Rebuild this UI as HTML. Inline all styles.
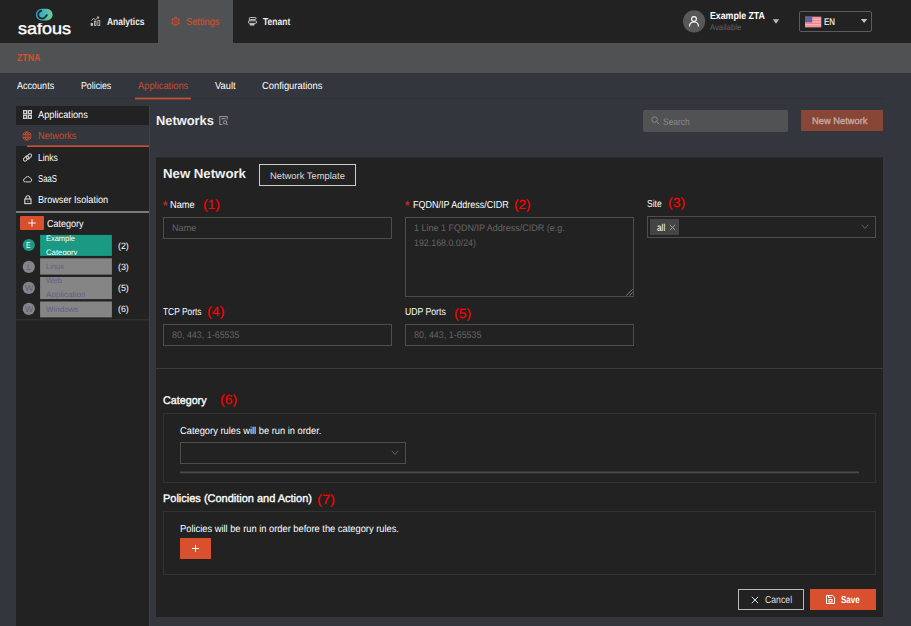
<!DOCTYPE html>
<html><head><meta charset="utf-8">
<style>
*{box-sizing:border-box;margin:0;padding:0}
html,body{width:911px;height:626px;overflow:hidden;background:#33363d;font-family:"Liberation Sans",sans-serif;color:#fff}
.a{position:absolute}
.t{position:absolute;white-space:nowrap;line-height:1;transform-origin:0 50%}
.b{font-weight:bold}
.or{color:#d9502e}
.red{color:#e0161b}
.ph{color:#5e5e5e}
.inp{position:absolute;border:1px solid #4e4e4e;background:#222}
#logo{-webkit-text-stroke:0.4px #fff}
.sb{-webkit-text-stroke:0.35px currentColor}.rs{-webkit-text-stroke:0.15px currentColor}
</style></head><body>
<!-- header -->
<div class="a" style="left:0;top:0;width:911px;height:43px;background:#222"></div>
<div class="a" style="left:158px;top:0;width:75px;height:43px;background:#505153"></div>
<div class="a" style="left:0;top:43px;width:911px;height:30px;background:#505153"></div>
<!-- logo -->
<svg class="a" style="left:34px;top:6px" width="20" height="16" viewBox="34 5.75 20 16">
<defs><linearGradient id="g" x1="0" x2="1"><stop offset="0" stop-color="#27a5d3"/><stop offset="0.45" stop-color="#3fb5bd"/><stop offset="1" stop-color="#74cc8c"/></linearGradient></defs>
<rect x="35.9" y="8.6" width="16.7" height="11.7" rx="5.85" fill="url(#g)"/>
<path d="M42 10.3 A4 4 0 1 0 44.9 17.2 L47.3 14.2" stroke="#222" stroke-width="1.8" fill="none" stroke-linejoin="round"/>
</svg>
<!-- nav -->
<svg class="a" style="left:90px;top:16px" width="11" height="11" viewBox="90 16 11 11" fill="none" stroke="#cfcfcf"><rect x="91.1" y="23.4" width="1.4" height="2" stroke-width="0.8" fill="#cfcfcf"/><rect x="94.4" y="21.3" width="1.6" height="4.1" stroke-width="0.8"/><rect x="97.9" y="20.6" width="1.9" height="4.8" stroke-width="0.8"/><path d="M91.4 20.6 L93.5 18.5 L95.6 19.8 L98.3 17.2 M97 17h1.6v1.6" stroke-width="0.9"/></svg>
<svg class="a" style="left:170px;top:16px" width="11" height="11" viewBox="-5.6 -5.5 11 11" fill="none" stroke="#c94d2e"><circle r="3.3" stroke-width="1"/><circle r="1.2" stroke-width="0.8"/><g stroke-width="2.1"><path d="M0 -3.3V-4.6M0 3.3V4.6" /><path d="M0 -3.3V-4.6M0 3.3V4.6" transform="rotate(60)"/><path d="M0 -3.3V-4.6M0 3.3V4.6" transform="rotate(120)"/></g></svg>
<svg class="a" style="left:247px;top:16px" width="11" height="11" viewBox="247 16 11 11" fill="none" stroke="#c8c8c8" stroke-width="0.95"><rect x="249.3" y="17.5" width="6.8" height="2" rx="1"/><rect x="248.4" y="20.8" width="8.2" height="2.6" rx="1.3"/><path d="M250.3 24.7h3.6" stroke-width="1.6" stroke-linecap="round"/><path d="M249.5 19.5v1.3M251 23.4v0.8" stroke-width="1.4"/></svg>
<!-- user -->
<svg class="a" style="left:682px;top:9px" width="24" height="24" viewBox="0 0 24 24"><circle cx="12.1" cy="12.3" r="11.1" fill="#585858"/></svg>
<svg class="a" style="left:688px;top:14.5px" width="12" height="13" viewBox="0 0 12 13" fill="none" stroke="#fff" stroke-width="1.1"><circle cx="6" cy="4" r="2.4"/><path d="M1.5 11.5 C1.5 8.2 3.6 7 6 7 C8.4 7 10.5 8.2 10.5 11.5"/></svg>
<svg class="a" style="left:772px;top:18px" width="8" height="7" viewBox="0 0 8 7"><path d="M0.8 1.2h6.4L4 5.8z" fill="#bdbdbd"/></svg>
<div class="a" style="left:799px;top:11px;width:73px;height:21px;border:1px solid #5c5c5c;border-radius:2px;background:#222"></div>
<svg class="a" style="left:804px;top:16px" width="18" height="12" viewBox="804 16 18 12"><rect x="805" y="16.8" width="16.2" height="10.4" fill="#f6c3c8"/><g fill="#f0747f"><rect x="805" y="16.8" width="16.2" height="0.8"/><rect x="805" y="18.4" width="16.2" height="0.8"/><rect x="805" y="20" width="16.2" height="0.8"/><rect x="805" y="21.6" width="16.2" height="0.8"/><rect x="805" y="23.2" width="16.2" height="0.8"/><rect x="805" y="24.8" width="16.2" height="0.8"/><rect x="805" y="26.4" width="16.2" height="0.8"/></g><rect x="805" y="16.8" width="7.2" height="5.6" fill="#5a63a6"/></svg>
<svg class="a" style="left:860px;top:17px" width="8" height="7" viewBox="0 0 8 7"><path d="M0.9 1.9h6.4L4.1 6z" fill="#c4c4c4"/></svg>
<!-- sub header -->
<!-- tabs -->
<div class="a" style="left:16px;top:98px;width:867px;height:1px;background:#303134"></div>
<div class="a" style="left:135px;top:97px;width:56px;height:3px;background:linear-gradient(#68403a 0,#68403a 1px,#cc4e2e 1px,#cc4e2e 2px,#68403a 2px)"></div>
<!-- sidebar -->
<div class="a" style="left:149px;top:106px;width:1px;height:520px;background:#3f4146"></div>
<div class="a" style="left:16px;top:106px;width:133px;height:520px;background:#222"></div>
<div class="a" style="left:16px;top:125px;width:133px;height:21px;background:#33363d"></div>
<div class="a" style="left:27px;top:145px;width:122px;height:1px;background:#8f4634"></div><div class="a" style="left:27px;top:146px;width:122px;height:1px;background:#cf4f2e"></div>
<svg class="a" style="left:23px;top:110.2px" width="9" height="9" viewBox="0 0 9 9" fill="none" stroke="#d0d0d0" stroke-width="1.3"><rect x="0.65" y="0.65" width="3" height="3"/><rect x="5.35" y="0.65" width="3" height="3"/><rect x="0.65" y="5.35" width="3" height="3"/><rect x="5.35" y="5.35" width="3" height="3"/></svg>
<svg class="a" style="left:22.4px;top:130.6px" width="10" height="10" viewBox="0 0 10 10" fill="none" stroke="#cf4f2e" stroke-width="0.8"><circle cx="5" cy="5" r="4.1"/><ellipse cx="5" cy="5" rx="1.9" ry="4.1"/><path d="M5 0.9v8.2M1.3 3.5h7.4M1.3 6.5h7.4"/></svg>
<svg class="a" style="left:23.3px;top:153.2px" width="9" height="9" viewBox="-4.5 -4.5 9 9" fill="none" stroke="#d0d0d0" stroke-width="1"><g transform="rotate(-45)"><rect x="-4.8" y="-1.9" width="6" height="3.2" rx="1.6"/><rect x="-1.2" y="-1.3" width="6" height="3.2" rx="1.6"/></g></svg>
<svg class="a" style="left:22.7px;top:174.6px" width="10" height="8" viewBox="0 0 10 8" fill="none" stroke="#d0d0d0" stroke-width="1"><path d="M2.3 6.9 a1.7 1.7 0 0 1 -0.2 -3.4 a2.8 2.8 0 0 1 5.2 -0.3 a1.9 1.9 0 0 1 -0.2 3.7 z"/></svg>
<svg class="a" style="left:23.8px;top:195px" width="9" height="10" viewBox="0 0 9 10" fill="none" stroke="#d8d8d8" stroke-width="1.1"><rect x="0.8" y="4" width="6.2" height="4.6"/><path d="M1.9 4 v-1.3 a2 2 0 0 1 4 0 v1.3"/><rect x="3.4" y="5.8" width="1" height="1" fill="#d8d8d8" stroke="none"/></svg>
<div class="a" style="left:16px;top:211px;width:133px;height:2px;background:#7a7a7a"></div>
<div class="a" style="left:20px;top:216px;width:24px;height:14px;background:#d9502e;border-radius:1px"></div>
<svg class="a" style="left:27px;top:218px" width="10" height="10" viewBox="0 0 10 10" stroke="#fff" stroke-width="0.95"><path d="M1.2 5h7.6M5 1.2v7.6"/></svg>
<!-- cat rows -->
<svg class="a" style="left:16px;top:230px" width="133" height="92" viewBox="16 230 133 92">
<circle cx="28.8" cy="245" r="6.1" fill="#1a9a82"/>
<rect x="40.1" y="234.9" width="71.8" height="21" fill="#1a9a82"/>
<circle cx="28.8" cy="266.9" r="6.1" fill="#858585"/>
<rect x="40.1" y="258.3" width="71.8" height="16.3" fill="#858585"/>
<circle cx="28.8" cy="287.9" r="6.1" fill="#858585"/>
<rect x="40.1" y="277" width="71.8" height="22.1" fill="#858585"/>
<circle cx="28.8" cy="308.9" r="6.1" fill="#858585"/>
<rect x="40.1" y="301.5" width="71.8" height="15.9" fill="#858585"/>
<rect x="16" y="319.4" width="133" height="0.9" fill="#3c3c3c"/>
</svg>
<!-- main head -->
<svg class="a" style="left:219px;top:115px" width="10" height="11" viewBox="219 115 10 11" fill="none" stroke="#939393" stroke-width="1.05"><path d="M227.2 119.6V116.4H219.8V124.4H222.6M221.4 118.6h4.2"/><circle cx="225.1" cy="122.4" r="1.6"/><path d="M226.3 123.6l1.4 1.2"/></svg>
<div class="a" style="left:643px;top:110px;width:145px;height:22px;background:#515254;border-radius:2px"></div>
<svg class="a" style="left:651.2px;top:116.3px" width="9" height="9" viewBox="0 0 9 9" fill="none" stroke="#888" stroke-width="1"><circle cx="3.6" cy="3.6" r="2.8"/><path d="M5.8 5.8 L8.3 8.3"/></svg>
<div class="a" style="left:801px;top:110px;width:82px;height:21px;background:#874636;border-radius:1px"></div>

<!-- panel -->
<div class="a" style="left:156px;top:157px;width:727px;height:1px;background:#2a2b2e"></div>
<div class="a" style="left:156px;top:158px;width:727px;height:459px;background:#222"></div>
<div class="a" style="left:259px;top:164px;width:97px;height:22px;border:1px solid #ccc"></div>

<div class="inp" style="left:163px;top:217px;width:229px;height:22px"></div>

<div class="inp" style="left:405px;top:217px;width:229px;height:80px"></div>
<svg class="a" style="left:625px;top:288px" width="8" height="8" viewBox="0 0 8 8" stroke="#9a9a9a" stroke-width="0.8"><path d="M1.2 7.6 L7.6 1.2 M4.4 7.6 L7.6 4.4"/></svg>

<div class="inp" style="left:647px;top:216px;width:229px;height:22px"></div>
<div class="a" style="left:650px;top:219px;width:29px;height:16px;background:#444"></div>
<svg class="a" style="left:669px;top:224px" width="7" height="7" viewBox="0 0 7 7" stroke="#aaa" stroke-width="0.9"><path d="M0.8 0.8 L6.2 6.2 M6.2 0.8 L0.8 6.2"/></svg>
<svg class="a" style="left:861.2px;top:224px" width="8" height="6" viewBox="0 0 8 6" fill="none" stroke="#666" stroke-width="1"><path d="M0.8 0.8 L4 4.5 L7.2 0.8"/></svg>

<div class="inp" style="left:163px;top:324px;width:229px;height:22px"></div>
<div class="inp" style="left:405px;top:324px;width:229px;height:22px"></div>

<div class="a" style="left:156px;top:368px;width:727px;height:1px;background:#3d3d3d"></div>

<div class="a" style="left:163px;top:413px;width:713px;height:70px;border:1px solid #333"></div>
<div class="inp" style="left:180px;top:442px;width:226px;height:22px"></div>
<svg class="a" style="left:391px;top:450px" width="8" height="6" viewBox="0 0 8 6" fill="none" stroke="#666" stroke-width="1"><path d="M0.8 0.8 L4 4.5 L7.2 0.8"/></svg>
<div class="a" style="left:180px;top:471px;width:679px;height:3px;background:linear-gradient(#363636 0,#363636 1px,#4a4a4a 1px,#4a4a4a 2px,#2e2e2e 2px)"></div>

<div class="a" style="left:163px;top:511px;width:713px;height:64px;border:1px solid #333"></div>
<div class="a" style="left:180px;top:538px;width:31px;height:21px;background:#d9502e"></div>
<div class="a" style="left:192px;top:548px;width:7px;height:1px;background:#fff"></div>
<div class="a" style="left:195px;top:545px;width:1px;height:7px;background:#fff"></div>

<div class="a" style="left:738px;top:589px;width:66px;height:21px;border:1px solid #bbb"></div>
<svg class="a" style="left:751px;top:596px" width="8" height="8" viewBox="0 0 8 8" stroke="#ddd" stroke-width="1"><path d="M0.8 0.8 L7.2 7.2 M7.2 0.8 L0.8 7.2"/></svg>
<div class="a" style="left:810px;top:589px;width:66px;height:21px;background:#d9502e"></div>
<svg class="a" style="left:826px;top:595px" width="9" height="9" viewBox="0 0 9 9" fill="none" stroke="#fff" stroke-width="1"><path d="M0.5 0.5 h6 l2 2 v6 h-8 z M2.5 0.5 v2 h3"/><rect x="3" y="4.5" width="3" height="2.5"/></svg>
<div class="t" id="logo" style="left:17.72px;top:19.89px;font-size:16.2px;color:#fff;transform:scaleX(1.1140) rotate(0.03deg);clip-path:inset(3.31px -2px -4px -2px)">safous</div>
<div class="t b" id="n1" style="left:106.60px;top:17.25px;font-size:10.1px;color:#ececec;transform:scaleX(0.8369) rotate(0.03deg)">Analytics</div>
<div class="t rs" id="n2" style="left:185.79px;top:17.25px;font-size:10.1px;color:#cf4e2e;transform:scaleX(0.9168) rotate(0.03deg)">Settings</div>
<div class="t b" id="n3" style="left:263.04px;top:17.25px;font-size:10.1px;color:#ececec;transform:scaleX(0.8421) rotate(0.03deg)">Tenant</div>
<div class="t b" id="u1" style="left:709.91px;top:10.55px;font-size:10.1px;color:#fff;transform:scaleX(0.8687) rotate(0.03deg)">Example ZTA</div>
<div class="t" id="u2" style="left:710.33px;top:22.90px;font-size:8.5px;color:#5f6072;transform:scaleX(0.9078) rotate(0.03deg)">Available</div>
<div class="t b" id="en" style="left:823.90px;top:17.22px;font-size:9.9px;color:#dcdcdc;transform:scaleX(0.8015) rotate(0.03deg)">EN</div>
<div class="t b" id="zt" style="left:16.63px;top:53.45px;font-size:10.1px;color:#d4502f;transform:scaleX(0.8651) rotate(0.03deg)">ZTNA</div>
<div class="t" id="t1" style="left:16.54px;top:81.45px;font-size:10.1px;color:#fff;transform:scaleX(0.8949) rotate(0.03deg)">Accounts</div>
<div class="t" id="t2" style="left:80.98px;top:81.45px;font-size:10.1px;color:#fff;transform:scaleX(0.8702) rotate(0.03deg)">Policies</div>
<div class="t" id="t3" style="left:137.63px;top:81.45px;font-size:10.1px;color:#c94c2e;transform:scaleX(0.9237) rotate(0.03deg)">Applications</div>
<div class="t" id="t4" style="left:214.59px;top:81.45px;font-size:10.1px;color:#fff;transform:scaleX(0.9227) rotate(0.03deg)">Vault</div>
<div class="t" id="t5" style="left:262.06px;top:81.45px;font-size:10.1px;color:#fff;transform:scaleX(0.9289) rotate(0.03deg)">Configurations</div>
<div class="t" id="s1" style="left:37.83px;top:109.55px;font-size:10.1px;color:#fff;transform:scaleX(0.9167) rotate(0.03deg)">Applications</div>
<div class="t" id="s2" style="left:37.58px;top:131.45px;font-size:10.1px;color:#c94c2e;transform:scaleX(0.9144) rotate(0.03deg)">Networks</div>
<div class="t" id="s3" style="left:37.99px;top:153.45px;font-size:10.1px;color:#fff;transform:scaleX(0.8430) rotate(0.03deg)">Links</div>
<div class="t" id="s4" style="left:37.94px;top:174.45px;font-size:10.1px;color:#fff;transform:scaleX(0.7714) rotate(0.03deg)">SaaS</div>
<div class="t" id="s5" style="left:38.07px;top:195.45px;font-size:10.1px;color:#fff;transform:scaleX(0.9058) rotate(0.03deg)">Browser Isolation</div>
<div class="t" id="c0" style="left:46.66px;top:219.35px;font-size:10.1px;color:#fff;transform:scaleX(0.8932) rotate(0.03deg)">Category</div>
<div class="t" id="e0" style="left:26.37px;top:240.72px;font-size:8.6px;color:#fff;transform:scaleX(0.7841) rotate(0.03deg)">E</div>
<div class="t" id="e1" style="left:27.20px;top:263.35px;font-size:8.8px;color:#5b5d86;transform:scaleX(0.8349) rotate(0.03deg)">L</div>
<div class="t" id="e2" style="left:25.30px;top:284.35px;font-size:8.8px;color:#5b5d86;transform:scaleX(0.9739) rotate(0.03deg)">W</div>
<div class="t" id="e3" style="left:25.30px;top:305.35px;font-size:8.8px;color:#5b5d86;transform:scaleX(0.9739) rotate(0.03deg)">W</div>
<div class="t" id="x1" style="left:45.51px;top:235.41px;font-size:7.9px;color:#fff;transform:scaleX(0.9452) rotate(0.03deg)">Example</div>
<div class="t" id="x2" style="left:45.65px;top:249.31px;font-size:7.9px;color:#fff;transform:scaleX(0.9841) rotate(0.03deg);clip-path:inset(0 0 1.91px 0)">Category</div>
<div class="t" id="x3" style="left:45.73px;top:263.11px;font-size:7.9px;color:#5f6188;transform:scaleX(0.9579) rotate(0.03deg)">Linux</div>
<div class="t" id="x4" style="left:46.19px;top:277.01px;font-size:7.9px;color:#5f6188;transform:scaleX(0.9790) rotate(0.03deg)">Web</div>
<div class="t" id="x5" style="left:46.04px;top:291.11px;font-size:7.9px;color:#5f6188;transform:scaleX(1.0240) rotate(0.03deg);clip-path:inset(0 0 0.41px 0)">Application</div>
<div class="t" id="x6" style="left:45.62px;top:306.11px;font-size:7.9px;color:#5f6188;transform:scaleX(1.0089) rotate(0.03deg)">Windows</div>
<div class="t" id="k1" style="left:117.70px;top:241.60px;font-size:9.1px;color:#fff;transform:scaleX(0.9731) rotate(0.03deg)">(2)</div>
<div class="t" id="k2" style="left:117.70px;top:262.60px;font-size:9.1px;color:#fff;transform:scaleX(0.9731) rotate(0.03deg)">(3)</div>
<div class="t" id="k3" style="left:117.70px;top:283.60px;font-size:9.1px;color:#fff;transform:scaleX(0.9731) rotate(0.03deg)">(5)</div>
<div class="t" id="k4" style="left:117.70px;top:305.10px;font-size:9.1px;color:#fff;transform:scaleX(0.9731) rotate(0.03deg)">(6)</div>
<div class="t b" id="h1" style="left:156.35px;top:113.63px;font-size:13.2px;color:#f0f0f0;transform:scaleX(0.9744) rotate(0.03deg)">Networks</div>
<div class="t" id="se" style="left:662.71px;top:117.46px;font-size:9.5px;color:#8c8c8c;transform:scaleX(0.8886) rotate(0.03deg)">Search</div>
<div class="t sb" id="nn" style="left:811.85px;top:116.46px;font-size:9.5px;color:#c6a8a0;transform:scaleX(0.9813) rotate(0.03deg)">New Network</div>
<div class="t b" id="p1" style="left:162.77px;top:166.63px;font-size:13.2px;color:#f0f0f0;transform:scaleX(1.0018) rotate(0.03deg)">New Network</div>
<div class="t" id="p2" style="left:270.40px;top:171.16px;font-size:9.5px;color:#ddd;transform:scaleX(0.9869) rotate(0.03deg)">Network Template</div>
<div class="t b" id="a1" style="left:162.86px;top:199.34px;font-size:13.3px;color:#c02820;transform:scaleX(0.8673) rotate(0.03deg)">*</div>
<div class="t" id="l1" style="left:170.40px;top:200.25px;font-size:10.1px;color:#fff;transform:scaleX(0.9164) rotate(0.03deg)">Name</div>
<div class="t rs" id="r1" style="left:202.67px;top:197.73px;font-size:13.2px;color:#ff0000;transform:scaleX(1.0501) rotate(0.03deg)">(1)</div>
<div class="t" id="ph1" style="left:171.79px;top:222.76px;font-size:9.5px;color:#646464;transform:scaleX(0.9618) rotate(0.03deg)">Name</div>
<div class="t b" id="a2" style="left:404.66px;top:199.34px;font-size:13.3px;color:#c02820;transform:scaleX(0.8663) rotate(0.03deg)">*</div>
<div class="t" id="l2" style="left:412.64px;top:200.45px;font-size:10.1px;color:#fff;transform:scaleX(0.8912) rotate(0.03deg)">FQDN/IP Address/CIDR</div>
<div class="t rs" id="r2" style="left:513.52px;top:198.23px;font-size:13.2px;color:#ff0000;transform:scaleX(1.0330) rotate(0.03deg)">(2)</div>
<div class="t" id="ph2" style="left:413.68px;top:222.76px;font-size:9.5px;color:#646464;transform:scaleX(0.9469) rotate(0.03deg)">1 Line 1 FQDN/IP Address/CIDR (e.g.</div>
<div class="t" id="ph3" style="left:413.72px;top:237.76px;font-size:9.5px;color:#646464;transform:scaleX(0.9310) rotate(0.03deg)">192.168.0.0/24)</div>
<div class="t" id="l3" style="left:647.08px;top:199.05px;font-size:10.1px;color:#fff;transform:scaleX(0.8431) rotate(0.03deg)">Site</div>
<div class="t rs" id="r3" style="left:667.57px;top:196.03px;font-size:13.2px;color:#ff0000;transform:scaleX(1.0569) rotate(0.03deg)">(3)</div>
<div class="t" id="al" style="left:656.58px;top:223.05px;font-size:10.1px;color:#fff;transform:scaleX(0.8206) rotate(0.03deg)">all</div>
<div class="t" id="l4" style="left:162.76px;top:306.65px;font-size:10.1px;color:#fff;transform:scaleX(0.8303) rotate(0.03deg)">TCP Ports</div>
<div class="t rs" id="r4" style="left:206.92px;top:305.03px;font-size:13.2px;color:#ff0000;transform:scaleX(1.0789) rotate(0.03deg)">(4)</div>
<div class="t" id="ph4" style="left:171.80px;top:329.76px;font-size:9.5px;color:#646464;transform:scaleX(0.9396) rotate(0.03deg)">80, 443, 1-65535</div>
<div class="t" id="l5" style="left:405.18px;top:306.55px;font-size:10.1px;color:#fff;transform:scaleX(0.8574) rotate(0.03deg)">UDP Ports</div>
<div class="t rs" id="r5" style="left:453.84px;top:306.73px;font-size:13.2px;color:#ff0000;transform:scaleX(1.0588) rotate(0.03deg)">(5)</div>
<div class="t" id="ph5" style="left:414.00px;top:329.76px;font-size:9.5px;color:#646464;transform:scaleX(0.9396) rotate(0.03deg)">80, 443, 1-65535</div>
<div class="t sb" id="c1" style="left:162.67px;top:395.30px;font-size:11.1px;color:#fff;transform:scaleX(0.9673) rotate(0.03deg)">Category</div>
<div class="t rs" id="r6" style="left:220.40px;top:393.33px;font-size:13.2px;color:#ff0000;transform:scaleX(1.0603) rotate(0.03deg)">(6)</div>
<div class="t" id="c2" style="left:180.06px;top:425.85px;font-size:10.1px;color:#fff;transform:scaleX(0.9230) rotate(0.03deg)">Category rules will be run in order.</div>
<div class="t sb" id="d1" style="left:163.41px;top:492.60px;font-size:11.1px;color:#fff;transform:scaleX(0.9898) rotate(0.03deg)">Policies (Condition and Action)</div>
<div class="t rs" id="r7" style="left:316.88px;top:493.23px;font-size:13.2px;color:#ff0000;transform:scaleX(1.1127) rotate(0.03deg)">(7)</div>
<div class="t" id="d2" style="left:179.50px;top:524.15px;font-size:10.1px;color:#fff;transform:scaleX(0.9226) rotate(0.03deg)">Policies will be run in order before the category rules.</div>
<div class="t" id="ca" style="left:764.51px;top:595.35px;font-size:10.1px;color:#ddd;transform:scaleX(0.8612) rotate(0.03deg)">Cancel</div>
<div class="t b" id="sv" style="left:841.47px;top:595.35px;font-size:10.1px;color:#fff;transform:scaleX(0.7921) rotate(0.03deg)">Save</div>
</body></html>
